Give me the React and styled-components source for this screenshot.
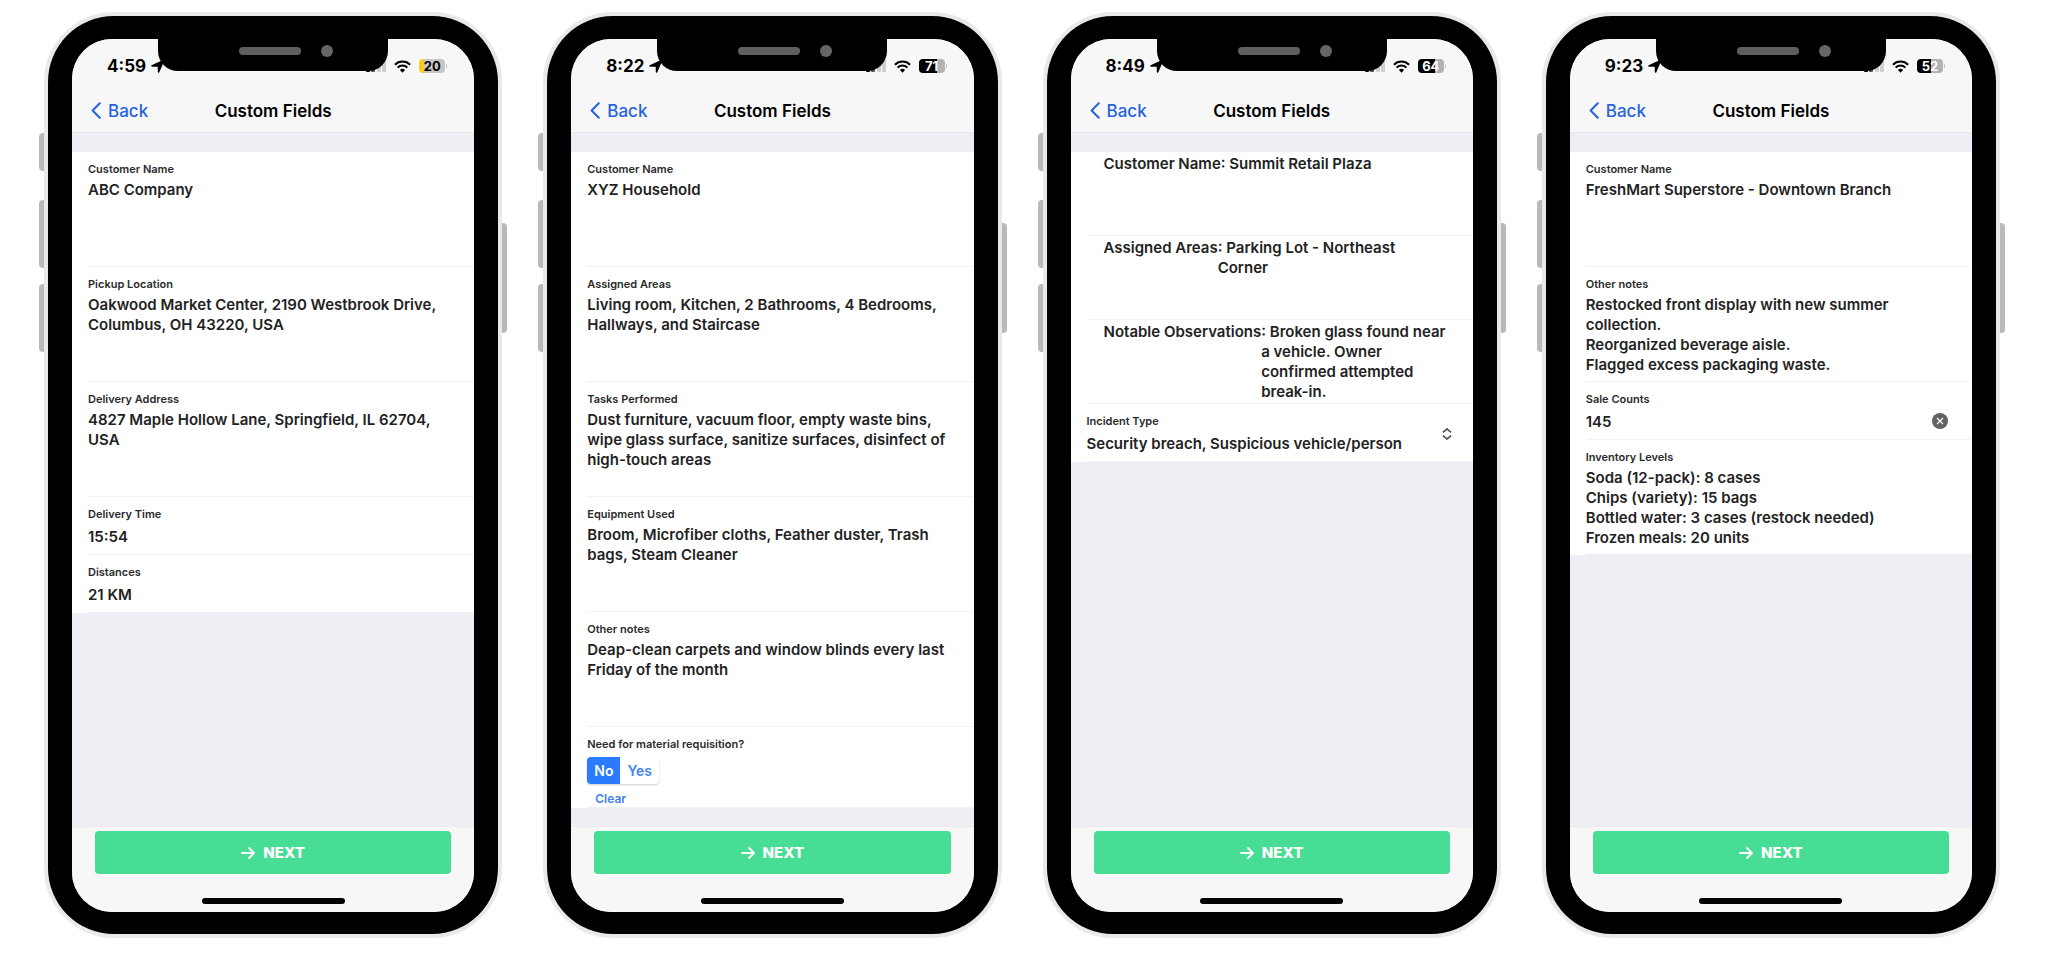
import { useState } from "react"
import styled, { createGlobalStyle } from "styled-components"

const GlobalStyle = createGlobalStyle`
    * {
        box-sizing: border-box;
    }
    body {
        margin: 0;
        background-color: white;
        font-family: Inter, "Liberation Sans", sans-serif;
    }
    button, input, textarea, select {
        font-family: inherit;
        margin: 0;
    }
`
const Page = styled.main`
    min-height: 100vh;
    display: grid;
    grid-template-columns: repeat(4, 1fr);
    gap: 41px;
    padding: 12px 48px 24px 44px;
`
const Phone = styled.section`
    position: relative;
    display: flex;
    border: 4px solid #e9e9e9;
    border-radius: 70px;
    background-color: #e9e9e9;
`
const Bezel = styled.div`
    position: relative;
    flex: 1;
    display: flex;
    padding: 23px 24px 22px;
    border-radius: 66px;
    background-color: black;
`
const SideButton = styled.span`
    position: absolute;
    top: ${props => props.$top}px;
    ${props => props.$side}: -9px;
    width: 5px;
    height: ${props => props.$height}px;
    background-color: #b9b9b9;
    border-radius: ${props => props.$side === "left" ? "4px 0 0 4px" : "0 4px 4px 0"};
`
const Notch = styled.div`
    position: absolute;
    top: 22px;
    left: 50%;
    width: 230px;
    height: 33px;
    margin-left: -115px;
    padding: 0 24px 8px 81px;
    display: flex;
    align-items: center;
    gap: 20px;
    background-color: black;
    border-radius: 0 0 20px 20px;
`
const Speaker = styled.span`
    width: 62px;
    height: 8px;
    border-radius: 4px;
    background-color: #5f5f5f;
`
const Camera = styled.span`
    width: 12px;
    height: 12px;
    border-radius: 50%;
    background-color: #666;
`
const Screen = styled.div`
    flex: 1;
    min-width: 0;
    display: flex;
    flex-direction: column;
    overflow: hidden;
    border-radius: 40px;
    background-color: #efeef4;
`
const Header = styled.header`
    background-color: #f7f7f7;
    border-bottom: 1px solid #e6e6ea;
`
const StatusBar = styled.div`
    height: 50px;
    padding: 4px 27px 0 35px;
    display: flex;
    align-items: center;
    justify-content: space-between;
`
const StatusGroup = styled.div`
    display: flex;
    align-items: center;
    gap: ${props => props.$gap}px;
`
const Time = styled.span`
    font-size: 17px;
    font-weight: 700;
`
const Battery = styled.span`
    position: relative;
    width: 26px;
    height: 14px;
    margin-right: 2px;
    display: flex;
    align-items: center;
    justify-content: center;
    border-radius: 4px;
    font-size: 13px;
    font-weight: 700;
    line-height: 14px;
    color: ${props => props.$low ? "black" : "white"};
    background: linear-gradient(to right, ${props => props.$low ? "#fbcb1b" : "black"} ${props => props.$level}%, ${props => props.$low ? "#c6c6c6" : "#b2b2b2"} ${props => props.$level}%);

    &::after {
        content: "";
        position: absolute;
        left: 27px;
        top: 5px;
        width: 1px;
        height: 4px;
        background-color: #c4c4c4;
    }
`
const NavBar = styled.div`
    height: 43px;
    padding: 0 19px;
    display: grid;
    grid-template-columns: 1fr auto 1fr;
    align-items: center;
`
const BackLink = styled.a`
    display: flex;
    align-items: center;
    gap: 7px;
    font-size: 17px;
    font-weight: 500;
    color: #2563e0;
    text-decoration: none;
`
const Title = styled.h1`
    margin: 0;
    font-size: 17px;
    font-weight: 600;
`
const Body = styled.div`
    flex: 1;
    padding: 19px 0 18px;
`
const List = styled.div`
    background-color: white;
`
const Field = styled.div`
    position: relative;
    min-height: ${props => props.$height}px;
    margin-left: 16px;
    padding: 9px 17px 0 0;
    border-bottom: 1px solid #f1f1f2;
`
const InlineField = styled.div`
    display: flex;
    min-height: 84px;
    margin-left: 16px;
    padding: 2px 24px 0 17px;
    border-bottom: 1px solid #f1f1f2;
`
const Label = styled.label`
    display: block;
    font-size: 11px;
    font-weight: 600;
    line-height: 16px;
    color: #2a2a2a;
`
const InlineLabel = styled.label`
    font-size: 15px;
    font-weight: 600;
    line-height: 20px;
    color: #222;
    white-space: nowrap;
`
const TextArea = styled.textarea`
    display: block;
    width: 100%;
    min-width: 0;
    height: 80px;
    padding: 0;
    border: none;
    outline: none;
    resize: none;
    overflow: hidden;
    background: transparent;
    font-size: 15px;
    font-weight: 600;
    line-height: 20px;
    color: #222;

    ${Label} + & {
        margin-top: 3px;
    }
`
const Input = styled.input`
    display: block;
    width: 100%;
    height: 28px;
    padding: 0;
    border: none;
    outline: none;
    background: transparent;
    font-size: 15px;
    font-weight: 600;
    color: #222;
`
const Select = styled.select`
    display: block;
    width: 100%;
    height: 28px;
    padding: 0;
    border: none;
    outline: none;
    appearance: none;
    background: transparent;
    font-size: 15px;
    font-weight: 600;
    color: #222;
`
const SelectIcon = styled.svg`
    position: absolute;
    right: 21px;
    top: 24px;
    pointer-events: none;
`
const ClearIcon = styled.button`
    position: absolute;
    right: 24px;
    top: 31px;
    width: 16px;
    height: 16px;
    padding: 0;
    display: flex;
    align-items: center;
    justify-content: center;
    border: none;
    border-radius: 50%;
    background-color: #636363;
`
const Segment = styled.div`
    display: flex;
    width: fit-content;
    height: 27px;
    margin-top: 5px;
    border-radius: 4px;
    overflow: hidden;
    box-shadow: 0 1px 2px rgba(0, 0, 0, 0.2);
`
const SegmentButton = styled.button`
    padding: 0 7px;
    border: none;
    font-size: 14px;
    font-weight: 600;
    color: ${props => props.$active ? "white" : "#4285ee"};
    background-color: ${props => props.$active ? "#2a7bfd" : "white"};
`
const ClearButton = styled.button`
    display: block;
    height: 16px;
    margin-top: 7px;
    padding: 0 8px;
    border: none;
    background: transparent;
    font-size: 12px;
    font-weight: 600;
    line-height: 16px;
    color: #3f82e8;
`
const Footer = styled.footer`
    height: 86px;
    padding: 4px 23px 8px;
    display: flex;
    flex-direction: column;
    align-items: center;
    justify-content: space-between;
    background-color: #f7f7f7;
    border-top: 1px solid #ebebee;
`
const NextButton = styled.button`
    width: 100%;
    height: 43px;
    display: flex;
    align-items: center;
    justify-content: center;
    gap: 8px;
    border: none;
    border-radius: 4px;
    background-color: #48dd95;
    color: white;
    font-size: 15px;
    font-weight: 800;
`
const HomeBar = styled.span`
    width: 143px;
    height: 6px;
    border-radius: 3px;
    background-color: black;
`

const phones = [
  {
    time: "4:59", battery: 20, low: true,
    fields: [
      { type: "area", label: "Customer Name", value: "ABC Company" },
      { type: "area", label: "Pickup Location", value: "Oakwood Market Center, 2190 Westbrook Drive, Columbus, OH 43220, USA" },
      { type: "area", label: "Delivery Address", value: "4827 Maple Hollow Lane, Springfield, IL 62704, USA" },
      { type: "input", label: "Delivery Time", value: "15:54" },
      { type: "input", label: "Distances", value: "21 KM" },
    ],
  },
  {
    time: "8:22", battery: 71,
    fields: [
      { type: "area", label: "Customer Name", value: "XYZ Household" },
      { type: "area", label: "Assigned Areas", value: "Living room, Kitchen, 2 Bathrooms, 4 Bedrooms, Hallways, and Staircase" },
      { type: "area", label: "Tasks Performed", value: "Dust furniture, vacuum floor, empty waste bins, wipe glass surface, sanitize surfaces, disinfect of high-touch areas" },
      { type: "area", label: "Equipment Used", value: "Broom, Microfiber cloths, Feather duster, Trash bags, Steam Cleaner" },
      { type: "area", label: "Other notes", value: "Deap-clean carpets and window blinds every last Friday of the month" },
      { type: "choice", label: "Need for material requisition?", value: "No", options: ["No", "Yes"] },
    ],
  },
  {
    time: "8:49", battery: 64,
    fields: [
      { type: "inline", label: "Customer Name", value: ": Summit Retail Plaza" },
      { type: "inline", label: "Assigned Areas", value: ": Parking Lot - Northeast Corner" },
      { type: "inline", label: "Notable Observations", value: ": Broken glass found near a vehicle. Owner confirmed attempted break-in." },
      { type: "select", label: "Incident Type", value: "Security breach, Suspicious vehicle/person" },
    ],
  },
  {
    time: "9:23", battery: 52,
    fields: [
      { type: "area", label: "Customer Name", value: "FreshMart Superstore - Downtown Branch" },
      { type: "area", label: "Other notes", value: "Restocked front display with new summer collection.\nReorganized beverage aisle.\nFlagged excess packaging waste." },
      { type: "input", label: "Sale Counts", value: "145", clearable: true },
      { type: "area", label: "Inventory Levels", value: "Soda (12-pack): 8 cases\nChips (variety): 15 bags\nBottled water: 3 cases (restock needed)\nFrozen meals: 20 units" },
    ],
  },
]

const LocationIcon = () => (
  <svg width="14" height="14" viewBox="0 0 14 14">
    <path d="M0.6 6.2 L13 0.4 Q13.9 0.2 13.6 1.1 L8.2 13.4 Q7.2 14.4 6.8 13 L6.7 7.8 L1 7.7 Q-0.5 7.2 0.6 6.2Z" />
  </svg>
)

const SignalIcon = () => (
  <svg width="20" height="12" viewBox="0 0 20 12">
    <rect x="0" y="8" width="4" height="4" rx="1" />
    <rect x="5" y="6" width="4" height="6" rx="1" fill="#555" />
    <rect x="11" y="3" width="4" height="9" rx="1" fill="#cfcfcf" />
    <rect x="16" y="0" width="4" height="12" rx="1" fill="#cfcfcf" />
  </svg>
)

const WifiIcon = () => (
  <svg width="17" height="13" viewBox="0 0 17 13" fill="none" stroke="black" strokeWidth="2">
    <path d="M0.9 4.7 A10.8 10.8 0 0 1 16.1 4.7" />
    <path d="M3.6 7.6 A7 7 0 0 1 13.4 7.6" />
    <path d="M8.5 12.8 L5.9 10 A3.8 3.8 0 0 1 11.1 10Z" fill="black" stroke="none" />
  </svg>
)

const ChoiceField = ({ id, field }) => {
  const [picked, setPicked] = useState(field.value)
  return (
    <Field $height={80}>
      <Label as="div" id={id}>{field.label}</Label>
      <Segment role="group" aria-labelledby={id}>
        {field.options.map(option => (
          <SegmentButton key={option} type="button" $active={picked === option}
            aria-pressed={picked === option} onClick={() => setPicked(option)}>
            {option}
          </SegmentButton>
        ))}
      </Segment>
      <ClearButton type="button" onClick={() => setPicked("")}>Clear</ClearButton>
    </Field>
  )
}

const InputField = ({ id, field }) => {
  const [value, setValue] = useState(field.value)
  return (
    <Field $height={58}>
      <Label htmlFor={id}>{field.label}</Label>
      <Input id={id} value={value} onChange={e => setValue(e.target.value)} />
      {field.clearable && (
        <ClearIcon type="button" aria-label="Clear value" onClick={() => setValue("")}>
          <svg width="8" height="8" viewBox="0 0 8 8" stroke="white" strokeWidth="1.3">
            <path d="M1 1 L7 7 M7 1 L1 7" />
          </svg>
        </ClearIcon>
      )}
    </Field>
  )
}

const FormField = ({ id, field }) => {
  if (field.type === "choice") return <ChoiceField id={id} field={field} />
  if (field.type === "input") return <InputField id={id} field={field} />
  if (field.type === "inline") {
    return (
      <InlineField>
        <InlineLabel htmlFor={id}>{field.label}</InlineLabel>
        <TextArea id={id} defaultValue={field.value} spellCheck={false} />
      </InlineField>
    )
  }
  if (field.type === "select") {
    return (
      <Field $height={58}>
        <Label htmlFor={id}>{field.label}</Label>
        <Select id={id}>
          <option>{field.value}</option>
        </Select>
        <SelectIcon width="10" height="12" viewBox="0 0 10 12" fill="none" stroke="#444" strokeWidth="1.4">
          <path d="M1 4.4 L5 0.9 L9 4.4 M1 7.6 L5 11.1 L9 7.6" />
        </SelectIcon>
      </Field>
    )
  }
  return (
    <Field $height={115}>
      <Label htmlFor={id}>{field.label}</Label>
      <TextArea id={id} defaultValue={field.value} spellCheck={false} />
    </Field>
  )
}

const PhoneScreen = ({ phone, index }) => {
  return (
    <Phone>
      <SideButton $side="left" $top={117} $height={38} />
      <SideButton $side="left" $top={184} $height={68} />
      <SideButton $side="left" $top={268} $height={68} />
      <SideButton $side="right" $top={207} $height={110} />
      <Bezel>
        <Screen>
          <Header>
            <StatusBar>
              <StatusGroup $gap={5}>
                <Time>{phone.time}</Time>
                <LocationIcon />
              </StatusGroup>
              <StatusGroup $gap={8}>
                <SignalIcon />
                <WifiIcon />
                <Battery $level={phone.battery} $low={phone.low}>{phone.battery}</Battery>
              </StatusGroup>
            </StatusBar>
            <NavBar>
              <BackLink href="#">
                <svg width="10" height="17" viewBox="0 0 10 17" fill="none" stroke="currentColor" strokeWidth="2" strokeLinecap="round" strokeLinejoin="round">
                  <path d="M8.8 1.2 L1.6 8.5 L8.8 15.8" />
                </svg>
                Back
              </BackLink>
              <Title>Custom Fields</Title>
            </NavBar>
          </Header>
          <Body>
            <List>
              {phone.fields.map((field, i) => (
                <FormField key={field.label} id={`field-${index}-${i}`} field={field} />
              ))}
            </List>
          </Body>
          <Footer>
            <NextButton type="button">
              <svg width="14" height="12" viewBox="0 0 14 12" fill="none" stroke="currentColor" strokeWidth="1.8" strokeLinecap="round" strokeLinejoin="round">
                <path d="M1 6 H13 M8 1 L13 6 L8 11" />
              </svg>
              NEXT
            </NextButton>
            <HomeBar />
          </Footer>
        </Screen>
        <Notch>
          <Speaker />
          <Camera />
        </Notch>
      </Bezel>
    </Phone>
  )
}

const App = () => {
  return (
    <Page>
      <GlobalStyle />
      {phones.map((phone, index) => (
        <PhoneScreen key={phone.time} phone={phone} index={index} />
      ))}
    </Page>
  )
}

export default App
